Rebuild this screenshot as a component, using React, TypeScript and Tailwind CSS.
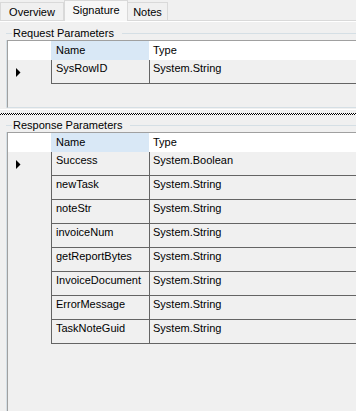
import React from 'react';

type Param = { name: string; type: string };

const requestParams: Param[] = [{ name: 'SysRowID', type: 'System.String' }];

const responseParams: Param[] = [
  { name: 'Success', type: 'System.Boolean' },
  { name: 'newTask', type: 'System.String' },
  { name: 'noteStr', type: 'System.String' },
  { name: 'invoiceNum', type: 'System.String' },
  { name: 'getReportBytes', type: 'System.String' },
  { name: 'InvoiceDocument', type: 'System.String' },
  { name: 'ErrorMessage', type: 'System.String' },
  { name: 'TaskNoteGuid', type: 'System.String' },
];

function RowArrow() {
  return (
    <svg width="5" height="9" viewBox="0 0 5 9">
      <polygon points="0,0 4.5,4.5 0,9" fill="#000" />
    </svg>
  );
}

function GroupHeader({ label }: { label: string }) {
  return (
    <div className="flex h-[13px] items-center">
      <div className="h-px w-[6px] bg-[#d5dfe5]" />
      <span className="pl-px pr-[8px] leading-[13px] text-black">{label}</span>
      <div className="h-px flex-1 bg-[#d5dfe5]" />
    </div>
  );
}

function ParamGrid({ rows, className }: { rows: Param[]; className: string }) {
  return (
    <div className={`border-l border-t border-[#a0a0a0] bg-[#f0f0f0] ${className}`}>
      {/* Header */}
      <div className="flex h-[19px] bg-white">
        <div className="w-[43px] shrink-0" />
        <div className="w-[98px] shrink-0 bg-[#d9e8f6] pl-[5px] pt-[2px] leading-[14px]">Name</div>
        <div className="flex-1 pl-[4px] pt-[2px] leading-[14px]">Type</div>
      </div>

      {/* Rows */}
      {rows.map((row, index) => (
        <div key={row.name} className="flex h-[24px]">
          <div className="flex w-[43px] shrink-0 items-center pl-[8px]">
            {index === 0 && <RowArrow />}
          </div>
          <div className="w-[98px] shrink-0 border-b border-l border-[#646464] pl-[4px] pt-px leading-[14px]">
            {row.name}
          </div>
          <div className="flex-1 border-b border-l border-[#646464] pl-[3px] pt-px leading-[14px]">
            {row.type}
          </div>
        </div>
      ))}
    </div>
  );
}

export default function App() {
  return (
    <div className="flex h-[411px] w-[356px] flex-col overflow-hidden bg-[#f0f0f0] font-['Liberation_Sans',Arial,sans-serif] text-[11px] text-black">
      {/* Tabs */}
      <div className="flex h-[21px] shrink-0 items-end border-b border-[#d9d9d9]">
        <div className="flex h-[18px] w-[64px] justify-center border-x border-t border-[#d9d9d9] pt-[2px] leading-[14px]">
          Overview
        </div>
        <div className="relative -mb-px flex h-[21px] w-[64px] justify-center border-x border-t border-[#d9d9d9] bg-[#f7f7f7] pt-[2px] leading-[14px]">
          Signature
        </div>
        <div className="flex h-[18px] w-[40px] justify-center border-r border-t border-[#d9d9d9] pt-[2px] leading-[14px]">
          Notes
        </div>
      </div>

      {/* Tab page */}
      <div className="flex flex-1 flex-col border-t border-white pl-[6px]">
        <div className="mt-[5px]">
          <GroupHeader label="Request Parameters" />
        </div>
        <div className="border-l border-[#d5dfe5]">
          <ParamGrid rows={requestParams} className="h-[68px] border-b border-b-[#d5dfe5]" />
        </div>

        {/* Splitter */}
        <div className="-ml-[6px] mt-px h-px bg-white" />
        <div className="-ml-[6px] mt-[3px] h-[2px] bg-[repeating-conic-gradient(#000_0_25%,#fff_0_50%)] bg-size-[2px_2px]" />
        <div className="h-[4px]" />

        <GroupHeader label="Response Parameters" />
        <div className="flex flex-1 flex-col border-l border-[#d5dfe5]">
          <ParamGrid rows={responseParams} className="flex-1" />
        </div>
      </div>
    </div>
  );
}
